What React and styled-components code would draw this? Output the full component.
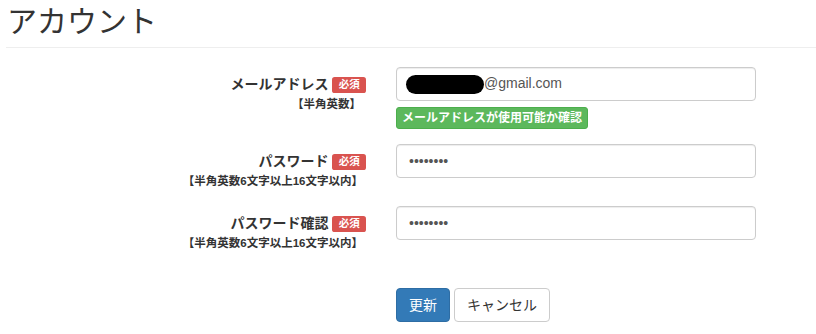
import React from "react";
import styled, { createGlobalStyle } from "styled-components";

const GlobalStyle = createGlobalStyle`
  html, body {
    margin: 0;
    padding: 0;
    background: #fff;
  }
  body {
    font-family: "Liberation Sans", "Noto Sans CJK JP", sans-serif;
    font-size: 14px;
    line-height: 1.42857;
    color: #333;
  }
  * {
    box-sizing: border-box;
  }
`;

const Page = styled.div`
  padding-left: 6px;
  width: 816px;
  height: 334px;
  overflow: hidden;
`;

const PageHeader = styled.div`
  padding: 5px 0 9px;
  margin-bottom: 19px;
  border-bottom: 1px solid #eee;
`;

const Title = styled.h1`
  margin: 0;
  font-size: 30px;
  font-weight: 400;
  line-height: 33px;
  padding-left: 1px;
  color: #333;
`;

const Form = styled.form`
  display: flex;
  flex-direction: column;
`;

const FormGroup = styled.div`
  display: grid;
  grid-template-columns: 375px 390px;
  margin-bottom: 15px;
`;

const LabelCol = styled.div`
  padding: 7px 15px 0 0;
  text-align: right;
`;

const Label = styled.label`
  display: block;
  font-weight: 700;
  font-size: 14px;
  line-height: 20px;
`;

const Required = styled.span`
  display: inline-block;
  margin-left: 4px;
  padding: 0.2em 0.6em 0.3em;
  font-size: 10.5px;
  font-weight: 700;
  line-height: 1;
  color: #fff;
  background-color: #d9534f;
  border-radius: 0.25em;
  vertical-align: 1px;
`;

const Hint = styled.div`
  font-size: 11.5px;
  font-weight: 700;
  line-height: 20px;
  padding-right: ${(p) => p.$inset}px;
`;

const FieldCol = styled.div`
  padding: 0 15px;
`;

const Input = styled.input`
  display: block;
  width: 360px;
  height: 34px;
  padding: 6px 12px;
  font-family: "Liberation Sans", "Noto Sans CJK JP", sans-serif;
  font-size: 14px;
  color: #555;
  background: #fff;
  border: 1px solid #ccc;
  border-radius: 4px;
  box-shadow: inset 0 1px 1px rgba(0, 0, 0, 0.075);
  outline: none;
`;

const FakeInput = styled.div`
  display: flex;
  align-items: center;
  width: 360px;
  height: 34px;
  padding: 6px 12px 6px 9px;
  font-size: 14px;
  color: #555;
  border: 1px solid #ccc;
  border-radius: 4px;
  box-shadow: inset 0 1px 1px rgba(0, 0, 0, 0.075);
`;

const Redacted = styled.span`
  display: inline-block;
  width: 78px;
  height: 19px;
  margin-top: 1px;
  background: #000;
  border-radius: 10px;
`;

const Button = styled.button`
  display: inline-block;
  padding: ${(p) => (p.$size === "xs" ? "1px 5px" : "6px 12px")};
  font-family: "Liberation Sans", "Noto Sans CJK JP", sans-serif;
  font-size: ${(p) => (p.$size === "xs" ? "12px" : "14px")};
  font-weight: ${(p) => (p.$size === "xs" ? 700 : 400)};
  line-height: ${(p) => (p.$size === "xs" ? "18px" : "20px")};
  border: 1px solid;
  border-radius: ${(p) => (p.$size === "xs" ? "3px" : "4px")};
  cursor: pointer;
  color: ${(p) => (p.$variant === "default" ? "#333" : "#fff")};
  background-color: ${(p) =>
    p.$variant === "success"
      ? "#5cb85c"
      : p.$variant === "primary"
      ? "#337ab7"
      : "#fff"};
  border-color: ${(p) =>
    p.$variant === "success"
      ? "#4cae4c"
      : p.$variant === "primary"
      ? "#2e6da4"
      : "#ccc"};
`;

const CheckButton = styled(Button)`
  margin-top: 6px;
`;

const Actions = styled.div`
  display: flex;
  gap: 4px;
  margin-top: 20px;
  padding-left: 390px;
`;

export default function App() {
  return (
    <Page>
      <GlobalStyle />
      <PageHeader>
        <Title>アカウント</Title>
      </PageHeader>
      <Form onSubmit={(e) => e.preventDefault()}>
        <FormGroup>
          <LabelCol>
            <Label>
              メールアドレス<Required>必須</Required>
            </Label>
            <Hint $inset={5}>【半角英数】</Hint>
          </LabelCol>
          <FieldCol>
            <FakeInput>
              <Redacted />
              <span>@gmail.com</span>
            </FakeInput>
            <CheckButton type="button" $variant="success" $size="xs">
              メールアドレスが使用可能か確認
            </CheckButton>
          </FieldCol>
        </FormGroup>

        <FormGroup>
          <LabelCol>
            <Label>
              パスワード<Required>必須</Required>
            </Label>
            <Hint $inset={3}>【半角英数6文字以上16文字以内】</Hint>
          </LabelCol>
          <FieldCol>
            <Input type="password" defaultValue="password" readOnly />
          </FieldCol>
        </FormGroup>

        <FormGroup>
          <LabelCol>
            <Label>
              パスワード確認<Required>必須</Required>
            </Label>
            <Hint $inset={3}>【半角英数6文字以上16文字以内】</Hint>
          </LabelCol>
          <FieldCol>
            <Input type="password" defaultValue="password" readOnly />
          </FieldCol>
        </FormGroup>

        <Actions>
          <Button type="submit" $variant="primary">
            更新
          </Button>
          <Button type="button" $variant="default">
            キャンセル
          </Button>
        </Actions>
      </Form>
    </Page>
  );
}
